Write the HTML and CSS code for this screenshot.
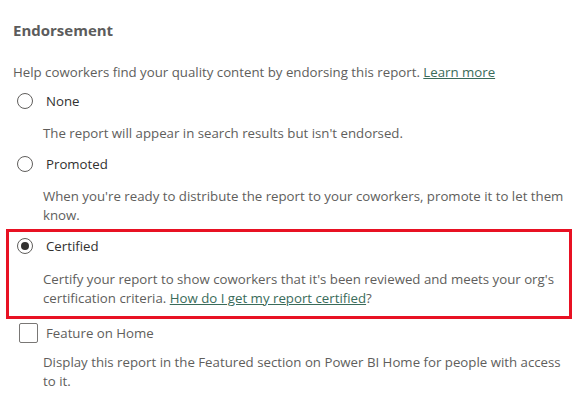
FILE: index.html
```html
<!DOCTYPE html>
<html lang="en">
<head>
<meta charset="utf-8">
<title>Endorsement</title>
<link rel="stylesheet" href="styles.css">
</head>
<body>
<div class="page">
  <h2 class="title">Endorsement</h2>
  <p class="intro">Help coworkers find your quality content by endorsing this report. <a class="link" href="#">Learn more</a></p>

  <div class="option opt-none">
    <div class="row"><span class="radio"></span><span class="label">None</span></div>
    <p class="desc">The report will appear in search results but isn't endorsed.</p>
  </div>

  <div class="option opt-promoted">
    <div class="row"><span class="radio"></span><span class="label">Promoted</span></div>
    <p class="desc">When you're ready to distribute the report to your coworkers, promote it to let them know.</p>
  </div>

  <div class="option highlight">
    <div class="row"><span class="radio checked"></span><span class="label">Certified</span></div>
    <p class="desc">Certify your report to show coworkers that it's been reviewed and meets your org's certification criteria. <a class="link" href="#">How do I get my report certified</a>?</p>
  </div>

  <div class="option opt-feature">
    <div class="row"><span class="checkbox"></span><span class="label">Feature on Home</span></div>
    <p class="desc">Display this report in the Featured section on Power BI Home for people with access to it.</p>
  </div>
</div>
</body>
</html>
```

FILE: styles.css
```css
* { box-sizing: border-box; }
html, body { margin: 0; padding: 0; background: #ffffff; }
body {
  font-family: "Open Sans", "Noto Sans", "Liberation Sans", sans-serif;
  font-size: 13.25px;
  color: #605e5c;
  width: 579px;
  height: 404px;
  overflow: hidden;
}
.page {
  padding: 20px 7px 0 13px;
}
.title {
  margin: 0;
  font-size: 15px;
  line-height: 20px;
  font-weight: 700;
  color: #5c5c5c;
}
.intro {
  margin: 22px 0 0 0;
  line-height: 20px;
}
.link {
  color: #3a6b5a;
  text-decoration: underline;
}
.option { margin-top: 9px; }
.opt-promoted { margin-top: 11px; }
.row {
  display: flex;
  align-items: center;
  height: 20px;
}
.radio {
  width: 16px;
  height: 16px;
  margin-left: 4px;
  border: 1px solid #605e5c;
  border-radius: 50%;
  display: flex;
  align-items: center;
  justify-content: center;
  flex: none;
}
.radio.checked::after {
  content: "";
  width: 8px;
  height: 8px;
  border-radius: 50%;
  background: #323130;
}
.checkbox {
  width: 19px;
  height: 20px;
  margin-left: 6px;
  border: 1px solid #797775;
  border-radius: 2px;
  flex: none;
}
.label {
  margin-left: 13px;
  color: #323130;
  line-height: 20px;
}
.opt-feature .label { margin-left: 8px; color: #605e5c; }
.desc {
  margin: 13px 0 0 30px;
  line-height: 19px;
  max-width: 525px;
}
.highlight {
  margin: 4px 0 0 -7px;
  border: 3px solid #e81123;
  padding: 4px 0 8px 4px;
}
.highlight .desc { margin-top: 14px; }
.opt-feature { margin-top: 4px; }
.opt-feature .desc { margin-top: 10px; }
```
